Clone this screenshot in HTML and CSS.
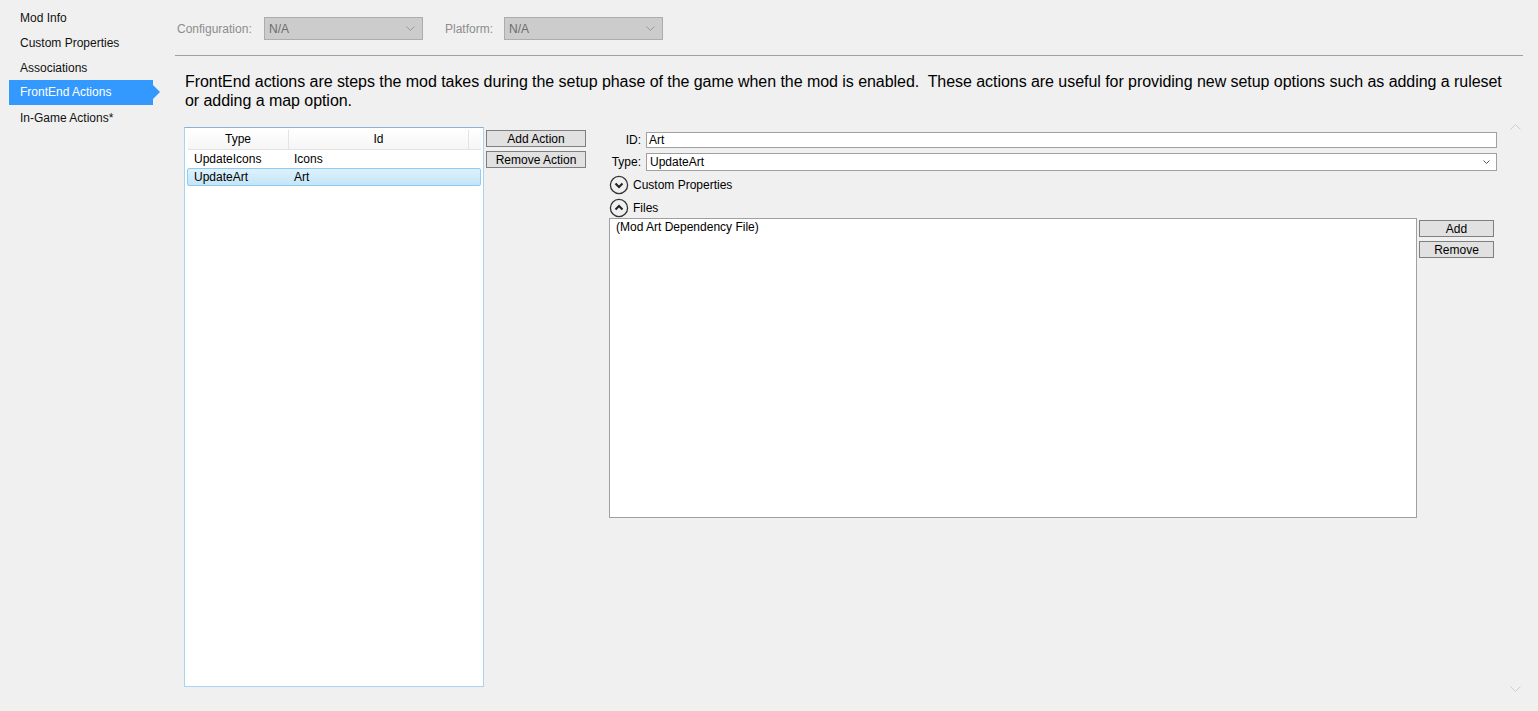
FILE: index.html
```html
<!DOCTYPE html>
<html lang="en">
<head>
  <meta charset="UTF-8">
  <title>Mod Properties - FrontEnd Actions</title>
  <link rel="stylesheet" href="styles.css">
</head>
<body>
  <div class="sidebar">
    <div class="nav-item">Mod Info</div>
    <div class="nav-item">Custom Properties</div>
    <div class="nav-item">Associations</div>
    <div class="nav-item active">FrontEnd Actions</div>
    <div class="nav-item">In-Game Actions*</div>
  </div>

  <div class="main">
    <div class="toolbar">
      <span class="toolbar-label config-label">Configuration:</span>
      <div class="combo disabled">
        <span>N/A</span>
        <svg class="combo-arrow" width="9" height="5" viewBox="0 0 9 5"><path d="M0.5 0.5 L4.5 4.5 L8.5 0.5" fill="none" stroke="#9a9a9a" stroke-width="1"/></svg>
      </div>
      <span class="toolbar-label platform-label">Platform:</span>
      <div class="combo disabled">
        <span>N/A</span>
        <svg class="combo-arrow" width="9" height="5" viewBox="0 0 9 5"><path d="M0.5 0.5 L4.5 4.5 L8.5 0.5" fill="none" stroke="#9a9a9a" stroke-width="1"/></svg>
      </div>
    </div>
    <div class="rule"></div>

    <p class="description">FrontEnd actions are steps the mod takes during the setup phase of the game when the mod is enabled.&nbsp; These actions are useful for providing new setup options such as adding a ruleset or adding a map option.</p>

    <div class="content">
      <!-- action list -->
      <div class="listview">
        <div class="list-header">
          <div class="col-head col-type">Type</div>
          <div class="col-head col-id">Id</div>
          <div class="col-head col-fill"></div>
        </div>
        <div class="list-row">
          <span class="cell cell-type">UpdateIcons</span>
          <span class="cell cell-id">Icons</span>
        </div>
        <div class="list-row selected">
          <span class="cell cell-type">UpdateArt</span>
          <span class="cell cell-id">Art</span>
        </div>
      </div>

      <div class="action-buttons">
        <button class="win-button">Add Action</button>
        <button class="win-button">Remove Action</button>
      </div>

      <!-- selected action details -->
      <div class="details">
        <div class="field-row">
          <label class="field-label" for="actionId">ID:</label>
          <div class="text-input" id="actionId">Art</div>
        </div>
        <div class="field-row type-row">
          <span class="field-label">Type:</span>
          <div class="combo-input">
            <span>UpdateArt</span>
            <svg width="7" height="4" viewBox="0 0 7 4"><path d="M0.5 0.5 L3.5 3.5 L6.5 0.5" fill="none" stroke="#555" stroke-width="1"/></svg>
          </div>
        </div>
        <div class="section-toggle">
          <svg width="20" height="20" viewBox="0 0 20 20"><circle cx="10" cy="10" r="8.6" fill="none" stroke="#333" stroke-width="1.3"/><path d="M6.5 8.5 L10 12 L13.5 8.5" fill="none" stroke="#222" stroke-width="2"/></svg>
          <span>Custom Properties</span>
        </div>
        <div class="section-toggle">
          <svg width="20" height="20" viewBox="0 0 20 20"><circle cx="10" cy="10" r="8.6" fill="none" stroke="#333" stroke-width="1.3"/><path d="M6.5 11.5 L10 8 L13.5 11.5" fill="none" stroke="#222" stroke-width="2"/></svg>
          <span>Files</span>
        </div>
        <div class="files">
          <div class="files-list">
            <div class="file-item">(Mod Art Dependency File)</div>
          </div>
          <div class="files-buttons">
            <button class="win-button">Add</button>
            <button class="win-button">Remove</button>
          </div>
        </div>
      </div>

      <div class="scroll-gutter">
        <svg width="11" height="6" viewBox="0 0 11 6"><path d="M0.5 5.5 L5.5 0.5 L10.5 5.5" fill="none" stroke="#cfcfcf" stroke-width="1"/></svg>
        <svg width="11" height="6" viewBox="0 0 11 6"><path d="M0.5 0.5 L5.5 5.5 L10.5 0.5" fill="none" stroke="#cfcfcf" stroke-width="1"/></svg>
      </div>
    </div>
  </div>
</body>
</html>
```

FILE: styles.css
```css
body {
  margin: 0;
  width: 1538px;
  height: 711px;
  display: flex;
  background-color: #f0f0f0;
  font-family: "Liberation Sans", Arial, sans-serif;
  font-size: 12px;
  color: #000;
  overflow: hidden;
}

/* left navigation */
.sidebar {
  flex: none;
  width: 175px;
  padding-top: 6px;
  box-sizing: border-box;
}

.nav-item {
  position: relative;
  margin-left: 9px;
  width: 144px;
  height: 24px;
  line-height: 24px;
  margin-bottom: 1px;
  padding-left: 11px;
  box-sizing: border-box;
  color: #111;
}

.nav-item.active {
  background-color: #3399ff;
  color: #fff;
  margin-top: -1px;
  height: 25px;
}

.nav-item.active::after {
  content: "";
  position: absolute;
  right: -7px;
  top: 5px;
  border-left: 7px solid #3399ff;
  border-top: 7px solid transparent;
  border-bottom: 7px solid transparent;
}

.main {
  flex: 1;
  display: flex;
  flex-direction: column;
  padding-right: 15px;
  min-width: 0;
}

/* configuration bar */
.toolbar {
  display: flex;
  align-items: center;
  padding-top: 17px;
  height: 23px;
}

.toolbar-label {
  color: #8d8d8d;
  box-sizing: border-box;
}

.config-label {
  width: 89px;
  padding-left: 2px;
}

.platform-label {
  width: 59px;
  margin-left: 22px;
}

.combo {
  width: 159px;
  height: 23px;
  box-sizing: border-box;
  display: flex;
  align-items: center;
  justify-content: space-between;
  padding: 0 7px 0 4px;
}

.combo.disabled {
  background-color: #cccccc;
  border: 1px solid #adadad;
  color: #6d6d6d;
}

.rule {
  margin-top: 15px;
  border-top: 1px solid #a0a0a0;
}

.description {
  margin: 16px 8px 0 10px;
  font-family: "Liberation Sans", Arial, sans-serif;
  font-size: 16px;
  line-height: 19px;
  letter-spacing: -0.05px;
  color: #000;
}

/* main content row */
.content {
  flex: 1;
  display: flex;
  margin: 17px 0 24px 9px;
  min-height: 0;
}

.listview {
  flex: none;
  width: 300px;
  box-sizing: border-box;
  border: 1px solid #a9d3f0;
  border-top-color: #8fb2d0;
  background: #fff;
  padding: 2px 2px;
}

.list-header {
  display: flex;
  height: 20px;
  margin-left: 1px;
  background: linear-gradient(#ffffff, #f5f5f5);
  border-bottom: 1px solid #e3e3e3;
  box-sizing: border-box;
}

.col-head {
  line-height: 19px;
  text-align: center;
  border-right: 1px solid #e3e3e3;
  box-sizing: border-box;
}

.col-type { width: 101px; }
.col-id { width: 180px; }
.col-fill { flex: 1; border-right: none; }

.list-row {
  display: flex;
  height: 18px;
  line-height: 16px;
  border: 1px solid transparent;
  border-radius: 2px;
  box-sizing: border-box;
}

.list-row.selected {
  background: linear-gradient(#def1fc, #c4e5f7);
  border-color: #8fccf1;
}

.cell-type {
  width: 101px;
  padding-left: 6px;
  box-sizing: border-box;
}

.cell-id {
  padding-left: 5px;
}

.action-buttons {
  flex: none;
  width: 100px;
  margin: 3px 0 0 2px;
  display: flex;
  flex-direction: column;
  gap: 4px;
}

.win-button {
  height: 17px;
  padding: 0;
  background-color: #e1e1e1;
  border: 1px solid #7f7f7f;
  font-family: "Liberation Sans", Arial, sans-serif;
  font-size: 12px;
  line-height: 14px;
  color: #000;
}

/* details panel */
.details {
  flex: 1;
  margin-left: 23px;
  padding-top: 5px;
  display: flex;
  flex-direction: column;
  min-width: 0;
}

.field-row {
  display: flex;
  align-items: center;
}

.type-row {
  margin-top: 5px;
}

.field-label {
  width: 32px;
  text-align: right;
  flex: none;
}

.text-input {
  flex: 1;
  margin-left: 5px;
  height: 16px;
  line-height: 14px;
  padding-left: 2px;
  box-sizing: border-box;
  background: #fff;
  border: 1px solid #a0a0a0;
}

.combo-input {
  flex: 1;
  margin-left: 5px;
  height: 18px;
  box-sizing: border-box;
  background: #fff;
  border: 1px solid #a0a0a0;
  display: flex;
  align-items: center;
  justify-content: space-between;
  padding: 0 6px 0 3px;
}

.section-toggle {
  display: flex;
  align-items: center;
  height: 18px;
  margin-top: 5px;
  gap: 4px;
}

.section-toggle + .section-toggle {
  margin-top: 5px;
}

.files {
  display: flex;
  margin-top: 1px;
}

.files-list {
  width: 808px;
  height: 300px;
  box-sizing: border-box;
  background: #fff;
  border: 1px solid #a0a0a0;
  padding: 1px 6px;
}

.file-item {
  line-height: 15px;
}

.files-buttons {
  width: 75px;
  margin: 2px 0 0 2px;
  display: flex;
  flex-direction: column;
  gap: 4px;
}

.scroll-gutter {
  flex: none;
  width: 26px;
  display: flex;
  flex-direction: column;
  justify-content: space-between;
  align-items: flex-end;
  padding-right: 2px;
  box-sizing: border-box;
  margin: -3px 0 -5px 0;
}
```
